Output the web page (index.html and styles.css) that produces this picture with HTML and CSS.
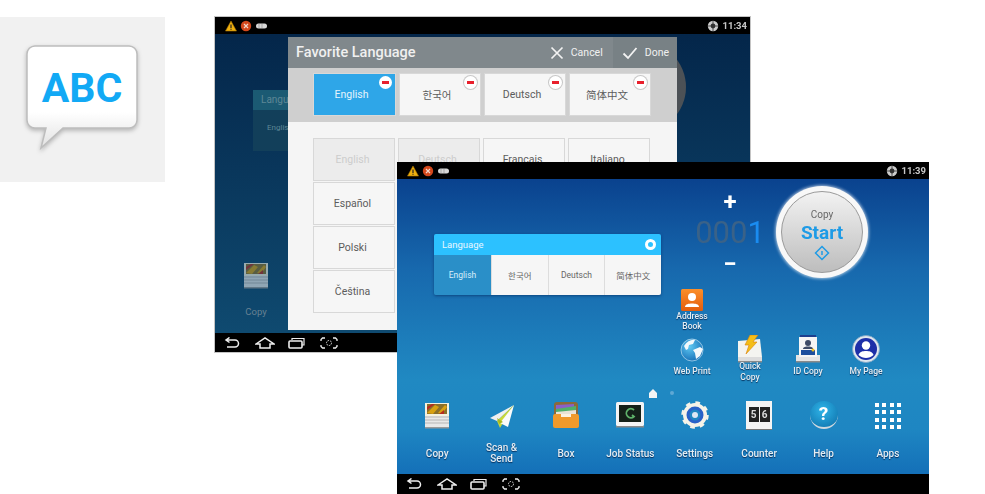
FILE: index.html
```html
<!DOCTYPE html>
<html lang="en">
<head>
    <meta charset="UTF-8">
    <meta name="viewport" content="width=device-width, initial-scale=1.0">
    <title>Language Settings</title>
    <link rel="stylesheet" href="styles.css">
</head>
<body>
    <svg class="defs" width="0" height="0" aria-hidden="true">
        <defs>
            <symbol id="i-warn" viewBox="0 0 12 12"><path d="M6 1 11.5 11H.5z" fill="#eeb010" stroke="#a87200" stroke-width=".6"/><path d="M6 4.500v3.400M6 8.800v1" stroke="#222" stroke-width="1.200"/></symbol>
            <symbol id="i-err" viewBox="0 0 12 12"><circle cx="6" cy="6" r="5.200" fill="#d4481c"/><path d="M4 4l4 4M8 4l-4 4" stroke="#f3d8cc" stroke-width="1.200"/></symbol>
            <symbol id="i-msg" viewBox="0 0 12 12"><path d="M3.500 3.500h6a2.200 2.200 0 0 1 0 5h-6a2.500 2.500 0 0 1 0-5z" fill="#d8d8d8"/><path d="M4 4v4M7 4v4" stroke="#888" stroke-width=".6"/></symbol>
            <symbol id="i-globe" viewBox="0 0 12 12"><circle cx="6" cy="6" r="5.200" fill="#ccc"/><circle cx="6" cy="6" r="2.400" fill="#333"/><path d="M.8 6h10.400M6 .8v10.400" stroke="#333" stroke-width=".8"/></symbol>
            <symbol id="i-back" viewBox="0 0 20 12"><path d="M3 3h9a3.500 3.500 0 0 1 0 7H4M6.500 .5 3 3l3.500 2.500" fill="none" stroke="#eee" stroke-width="1.500"/></symbol>
            <symbol id="i-home" viewBox="0 0 20 12"><path d="M1 7 10 1l9 6h-4v4H5V7z" fill="none" stroke="#eee" stroke-width="1.500"/></symbol>
            <symbol id="i-recent" viewBox="0 0 20 12"><path d="M5 3V1.500h12V8h-2" fill="none" stroke="#eee" stroke-width="1.200"/><rect x="2" y="4" width="13" height="7" rx="1" fill="none" stroke="#eee" stroke-width="1.600"/></symbol>
            <symbol id="i-capture" viewBox="0 0 20 12"><path d="M2 4V2.500L3.500 1H6M14 1h2.500L18 2.500V4M18 8v1.500L16.500 11H14M6 11H3.500L2 9.500V8" fill="none" stroke="#eee" stroke-width="1.300"/><circle cx="10" cy="6" r="2.500" fill="none" stroke="#ddd" stroke-width="1" stroke-dasharray="1.500 1"/></symbol>
            <symbol id="i-copy" viewBox="0 0 26 28"><path d="M1 13h24v13H1z" fill="#e8e8e8"/><path d="M1 16h24M1 19h24M1 22h24" stroke="#aaa" stroke-width=".8"/><rect x="1" y="2" width="24" height="13" fill="#f4f1df"/><rect x="3" y="3" width="20" height="10" fill="#8a6f2a"/><path d="M3 12 11 4l4 2-6 7zM14 12l7-8 2 2-5 7z" fill="#d8a010"/><path d="M3 6l5-3h3L3 9zM15 13l5-4v4z" fill="#b52a20"/><path d="M1 26h24v1.500H1z" fill="#999"/></symbol>
        </defs>
    </svg>

    <div class="stage">
        <div class="tile">
            <svg class="bubble" viewBox="0 0 165 165" width="165" height="165">
                <defs>
                    <linearGradient id="bubbleFill" x1="0" y1="0" x2="0" y2="1">
                        <stop offset="0" stop-color="#fff"/>
                        <stop offset=".65" stop-color="#fff"/>
                        <stop offset="1" stop-color="#e2e2e2"/>
                    </linearGradient>
                </defs>
                <path class="bubble-shape" d="M35 29h94a8 8 0 0 1 8 8v66a8 8 0 0 1-8 8H63l-22 20 5-20H35a8 8 0 0 1-8-8V37a8 8 0 0 1 8-8z" fill="url(#bubbleFill)" stroke="#bdbdbd" stroke-width="1.500"/>
                <text class="bubble-text" x="82" y="85" text-anchor="middle">ABC</text>
            </svg>
        </div>

        <div class="screen screen-back">
            <div class="status">
                <svg class="st-icon"><use href="#i-warn"/></svg>
                <svg class="st-icon"><use href="#i-err"/></svg>
                <svg class="st-icon"><use href="#i-msg"/></svg>
                <svg class="st-icon st-right"><use href="#i-globe"/></svg>
                <span class="time">11:34</span>
            </div>
            <div class="home home-dim">
                <div class="dim-start"></div>
                <div class="dim-card">
                    <div class="dim-card-head">Language</div>
                    <div class="dim-card-body">English</div>
                </div>
                <div class="dim-copy">
                    <svg width="26" height="28"><use href="#i-copy"/></svg>
                    <span>Copy</span>
                </div>

                <div class="modal">
                    <div class="modal-head">
                        <span class="modal-title">Favorite Language</span>
                        <div class="modal-action">
                            <svg width="14" height="14" viewBox="0 0 14 14"><path d="M1.500 1.500l11 11M12.500 1.500l-11 11" stroke="#f2f2f2" stroke-width="1.700"/></svg>
                            <span>Cancel</span>
                        </div>
                        <div class="modal-action action-done">
                            <svg width="16" height="14" viewBox="0 0 16 14"><path d="M1.500 7.500l4.500 4.500L14.500 2" fill="none" stroke="#f2f2f2" stroke-width="1.800"/></svg>
                            <span>Done</span>
                        </div>
                    </div>
                    <div class="fav-row">
                        <div class="lang-tile selected">English<i class="remove"></i></div>
                        <div class="lang-tile cjk-kr">한국어<i class="remove"></i></div>
                        <div class="lang-tile">Deutsch<i class="remove"></i></div>
                        <div class="lang-tile cjk-sc">简体中文<i class="remove"></i></div>
                    </div>
                    <div class="lang-grid">
                        <div class="lang-tile disabled">English</div>
                        <div class="lang-tile disabled">Deutsch</div>
                        <div class="lang-tile">Français</div>
                        <div class="lang-tile">Italiano</div>
                        <div class="lang-tile">Español</div>
                        <div class="lang-tile first-col">Polski</div>
                        <div class="lang-tile first-col">Čeština</div>
                    </div>
                </div>
            </div>
            <div class="nav">
                <svg class="nav-icon"><use href="#i-back"/></svg>
                <svg class="nav-icon"><use href="#i-home"/></svg>
                <svg class="nav-icon"><use href="#i-recent"/></svg>
                <svg class="nav-icon"><use href="#i-capture"/></svg>
            </div>
        </div>

        <div class="screen screen-front">
            <div class="status">
                <svg class="st-icon"><use href="#i-warn"/></svg>
                <svg class="st-icon"><use href="#i-err"/></svg>
                <svg class="st-icon"><use href="#i-msg"/></svg>
                <svg class="st-icon st-right"><use href="#i-globe"/></svg>
                <span class="time">11:39</span>
            </div>
            <div class="home home-front">
                <div class="home-top">
                    <div class="lang-card">
                        <div class="lang-card-head">
                            <span>Language</span>
                            <i class="gear-dot"></i>
                        </div>
                        <div class="lang-card-tabs">
                            <div class="lang-tab active">English</div>
                            <div class="lang-tab cjk-kr">한국어</div>
                            <div class="lang-tab">Deutsch</div>
                            <div class="lang-tab cjk-sc">简体中文</div>
                        </div>
                    </div>
                    <div class="counter">
                        <span class="counter-btn">+</span>
                        <span class="counter-num">000<b>1</b></span>
                        <span class="counter-btn">−</span>
                    </div>
                    <div class="start">
                        <div class="start-inner">
                            <span class="start-copy">Copy</span>
                            <span class="start-label">Start</span>
                            <svg width="16" height="16" viewBox="0 0 16 16"><path d="M8 1.500 14.500 8 8 14.500 1.500 8z" fill="none" stroke="#1e9be6" stroke-width="1.500"/><path d="M8 6v4" stroke="#1e9be6" stroke-width="1.500"/></svg>
                        </div>
                    </div>
                </div>

                <div class="shortcuts">
                    <div class="app app-address">
                        <svg width="22" height="22" viewBox="0 0 22 22">
                            <defs><linearGradient id="orange" x1="0" y1="0" x2="0" y2="1"><stop offset="0" stop-color="#fb8f2a"/><stop offset="1" stop-color="#e45c0c"/></linearGradient></defs>
                            <rect width="22" height="22" rx="1.500" fill="url(#orange)"/>
                            <circle cx="11" cy="8" r="4" fill="#fff"/>
                            <path d="M4 18c0-3 4-3.500 7-3.500s7 .5 7 3.500z" fill="#fff"/>
                        </svg>
                        <span class="app-label">Address<br>Book</span>
                    </div>
                    <div class="shortcuts-gap"></div>
                    <div class="app">
                        <svg width="24" height="28" viewBox="0 0 24 28">
                            <defs><radialGradient id="globe" cx=".4" cy=".35" r=".8"><stop offset="0" stop-color="#5fc8f2"/><stop offset="1" stop-color="#0b62ae"/></radialGradient></defs>
                            <circle cx="12" cy="15" r="11" fill="url(#globe)" stroke="#d8eef8" stroke-width=".6"/>
                            <path d="M4 11c3-5 8-7 11-6l-2 4-4 1-1 4-2 1zM13 15l7-3 3 2-3 7-4 3-1-6z" fill="#f2f8fb"/>
                        </svg>
                        <span class="app-label">Web Print</span>
                    </div>
                    <div class="app app-tight">
                        <svg width="26" height="28" viewBox="0 0 26 28">
                            <path d="M1 6l22-2 2 18H1z" fill="#f4f4f0"/>
                            <path d="M1 22h24v4H1z" fill="#dcdcdc"/>
                            <path d="M1 26h24v1.500H1z" fill="#8a8a8a"/>
                            <path d="M13 0h8l-5 7h4L9 19l3-9H8z" fill="#f4be18" stroke="#d9820a" stroke-width=".6"/>
                        </svg>
                        <span class="app-label">Quick<br>Copy</span>
                    </div>
                    <div class="app">
                        <svg width="26" height="28" viewBox="0 0 26 28">
                            <path d="M5 0h16v3H5z" fill="#1d3f8e"/>
                            <rect x="4" y="2" width="18" height="20" fill="#f5f5f5"/>
                            <circle cx="13" cy="8" r="3" fill="#3d4a66"/>
                            <path d="M8 14c0-2 3-2.500 5-2.500s5 .5 5 2.500z" fill="#3d4a66"/>
                            <rect x="6" y="15" width="14" height="5" fill="#1d4f9e"/>
                            <circle cx="18" cy="15" r="1.500" fill="#f0c020"/>
                            <path d="M1 20h3v2h18v-2h3v6H1z" fill="#e4e4e4"/>
                            <path d="M1 26h24v1.500H1z" fill="#8a8a8a"/>
                        </svg>
                        <span class="app-label">ID Copy</span>
                    </div>
                    <div class="app">
                        <svg width="28" height="28" viewBox="0 0 28 28">
                            <circle cx="14" cy="14" r="13.500" fill="#dfe7ee" stroke="#7da3c4" stroke-width=".8"/>
                            <circle cx="14" cy="14" r="11" fill="#1d2fa8"/>
                            <circle cx="14" cy="10.500" r="4.200" fill="#fff"/>
                            <path d="M6.500 20c1-3.500 4.500-4 7.500-4s6.500 .5 7.500 4c-2 2-5 3-7.500 3s-5.500-1-7.500-3z" fill="#fff"/>
                        </svg>
                        <span class="app-label">My Page</span>
                    </div>
                </div>

                <div class="pager">
                    <svg width="10" height="9" viewBox="0 0 10 9"><path d="M5 0 9 4v5H1V4z" fill="#f4f4f4"/></svg>
                    <i class="pager-dot"></i>
                </div>

                <div class="dock">
                    <div class="dock-item">
                        <svg width="26" height="28"><use href="#i-copy"/></svg>
                        <span class="dock-label">Copy</span>
                    </div>
                    <div class="dock-item">
                        <svg width="26" height="28" viewBox="0 0 26 28">
                            <path d="M25 4 1 17l7 3z" fill="#f0f0f0"/>
                            <path d="M25 4 8 20l3 7z" fill="#c9d83a"/>
                            <path d="M25 4 11 22l8 4z" fill="#fbfbfb"/>
                            <path d="M8 17l2 6 4-2z" fill="#a9b820"/>
                        </svg>
                        <span class="dock-label">Scan &amp;<br>Send</span>
                    </div>
                    <div class="dock-item">
                        <svg width="28" height="28" viewBox="0 0 28 28">
                            <rect x="2" y="1" width="24" height="15" rx="3" fill="#8a6a3a"/>
                            <path d="M4 4l18-1v4L4 9z" fill="#8a5fc8"/>
                            <path d="M4 8l20-3v4L4 12z" fill="#4fb06a"/>
                            <path d="M4 11l20-2v4H4z" fill="#e9e3d6"/>
                            <rect x="1" y="13" width="26" height="14" rx="2" fill="#ef9a2c"/>
                            <rect x="9" y="13" width="10" height="3" fill="#fbf2e2"/>
                        </svg>
                        <span class="dock-label">Box</span>
                    </div>
                    <div class="dock-item">
                        <svg width="28" height="26" viewBox="0 0 28 26">
                            <rect width="28" height="24" rx="1.500" fill="#f4f4f4"/>
                            <rect x="3" y="3" width="22" height="17" fill="#142018"/>
                            <path d="M18 8a4.500 4.500 0 1 0 0 6.500l-2-1.500" fill="none" stroke="#5fb26a" stroke-width="1.800"/>
                            <path d="M0 24h28v1.500H0z" fill="#8a8a8a"/>
                        </svg>
                        <span class="dock-label">Job Status</span>
                    </div>
                    <div class="dock-item">
                        <svg width="28" height="28" viewBox="0 0 28 28">
                            <circle cx="14" cy="14" r="9.500" fill="none" stroke="#f6f3e8" stroke-width="5"/>
                            <circle cx="14" cy="14" r="12" fill="none" stroke="#f6f3e8" stroke-width="3.500" stroke-dasharray="4.500 4.925"/>
                            <circle cx="14" cy="14" r="7" fill="none" stroke="#2a62c8" stroke-width="3"/>
                            <circle cx="14" cy="14" r="3" fill="#dce8f4"/>
                        </svg>
                        <span class="dock-label">Settings</span>
                    </div>
                    <div class="dock-item">
                        <div class="counter-app"><span>5</span><span>6</span></div>
                        <span class="dock-label">Counter</span>
                    </div>
                    <div class="dock-item">
                        <div class="help-app">?</div>
                        <span class="dock-label">Help</span>
                    </div>
                    <div class="dock-item">
                        <div class="apps-grid">
                            <i></i><i></i><i></i><i></i><i></i><i></i><i></i><i></i>
                            <i></i><i></i><i></i><i></i><i></i><i></i><i></i><i></i>
                        </div>
                        <span class="dock-label">Apps</span>
                    </div>
                </div>
            </div>
            <div class="nav">
                <svg class="nav-icon"><use href="#i-back"/></svg>
                <svg class="nav-icon"><use href="#i-home"/></svg>
                <svg class="nav-icon"><use href="#i-recent"/></svg>
                <svg class="nav-icon"><use href="#i-capture"/></svg>
            </div>
        </div>
    </div>
</body>
</html>
```
FILE: styles.css
```css
html, body { margin: 0; padding: 0; background: #fff; }
body { font-family: Roboto, "Liberation Sans", "Noto Sans CJK KR", sans-serif; overflow: hidden; }
.defs { position: absolute; }
.stage { position: relative; width: 985px; height: 494px; overflow: hidden; }
.cjk-kr { font-family: Roboto, "Noto Sans CJK KR", sans-serif; }
.cjk-sc { font-family: Roboto, "Noto Sans CJK SC", sans-serif; }

/* speech bubble tile */
.tile { position: absolute; left: 0; top: 17px; width: 165px; height: 165px; background: #f1f1f1; }
.bubble { display: block; }
.bubble-shape { filter: drop-shadow(0 2px 2px rgba(0, 0, 0, 0.25)); }
.bubble-text { font-family: Roboto, sans-serif; font-weight: 700; font-size: 41px; fill: #12a9f5; }

/* the two device screens, placed free on the canvas */
.screen { position: absolute; display: flex; flex-direction: column; width: 535px; filter: blur(0.6px); }
.screen-back { left: 215px; top: 17px; height: 335px; box-shadow: 0 0 0 1px #c4c4c4; }
.screen-front { left: 397px; top: 162px; width: 532px; height: 332px; }

.status { display: flex; align-items: center; flex: none; height: 17px; padding: 0 3px 0 10px; gap: 3px; background: #000; }
.st-icon { width: 12px; height: 12px; }
.st-right { margin-left: auto; }
.time { color: #c8c8c8; font-size: 9.500px; font-weight: 700; margin-left: 1px; }

.nav { display: flex; align-items: center; flex: none; height: 19px; padding-left: 8px; gap: 12px; background: #000; }
.screen-front .nav { height: 20px; }
.nav-icon { width: 20px; height: 12px; }

.home { position: relative; flex: 1; min-height: 0; }

/* back screen */
.home-dim { padding: 56px 0 0 38px; background: linear-gradient(#04264a, #0f4a70); }
.dim-start { position: absolute; left: 379px; top: 7px; width: 92px; height: 92px; border-radius: 50%; background: #4c5156; }
.dim-card { width: 200px; height: 61px; background: #123f5a; }
.dim-card-head { height: 20px; line-height: 20px; padding-left: 8px; font-size: 10px; color: #5d8796; background: #1b5a73; }
.dim-card-body { padding: 13px 0 0 14px; font-size: 8px; color: #5d8796; }
.dim-copy { display: flex; flex-direction: column; align-items: center; width: 26px; margin: 110px 0 0 -10px; opacity: 0.6; }
.dim-copy span { margin-top: 17px; font-size: 9.500px; color: #a0a8ac; }

.modal { position: absolute; left: 73px; top: 3px; bottom: 3px; width: 389px; background: #f5f5f5; }
.modal-head { display: flex; align-items: center; height: 31px; background: #80888c; color: #f0f0f0; }
.modal-title { flex: 1; padding-left: 8px; font-size: 14.500px; font-weight: 500; }
.modal-action { display: flex; align-items: center; gap: 7px; height: 100%; padding-right: 10px; font-size: 10.500px; }
.action-done { gap: 7px; padding: 0 8px 0 9px; background: #788185; }
.fav-row { display: flex; gap: 5px; height: 54px; box-sizing: border-box; padding: 6px 0 0 26px; background: #cfcfcf; }
.lang-tile { position: relative; display: flex; align-items: center; justify-content: center; box-sizing: border-box; width: 80px; height: 41px; padding-right: 3px; font-size: 10.500px; color: #5c5c5c; background: #f6f6f6; box-shadow: 0 0 0 1px #d8d8d8; }
.fav-row .lang-tile { padding-right: 6px; }
.selected { width: 81px; color: #e6f4fc; background: #2ea6e8; }
.disabled { color: #cdcdcd; background: #ececec; }
.remove { position: absolute; right: 3px; top: 2px; width: 13px; height: 13px; border-radius: 50%; background: #fff; box-shadow: 0 0 0 1px #c8c8c8; }
.selected .remove { box-shadow: none; }
.remove::after { content: ""; position: absolute; left: 3px; top: 5px; width: 7px; height: 3px; background: #e8202c; }
.lang-grid { display: grid; grid-template-columns: repeat(4, 80px); grid-auto-rows: 41px; gap: 3px 5px; padding: 17px 0 0 26px; }
.first-col { grid-column: 1; }

/* front screen */
.home-front { display: flex; flex-direction: column; background: linear-gradient(#0a428e 0%, #1768ad 30%, #2089c2 68%, #1e86c2 85%, #1470b8 100%); }
.home-top { display: flex; align-items: flex-start; height: 110px; padding-left: 37px; }
.lang-card { flex: none; width: 227px; margin-top: 55px; border-radius: 2px; overflow: hidden; box-shadow: 0 1px 3px rgba(0, 30, 80, 0.5); }
.lang-card-head { display: flex; align-items: center; justify-content: space-between; height: 21px; padding: 0 5px 0 8px; font-size: 9.500px; color: #e8f7ff; background: #2cc1ff; }
.gear-dot { width: 5px; height: 5px; border: 3px solid #fff; border-radius: 50%; }
.lang-card-tabs { display: flex; height: 40px; background: #f6f6f6; }
.lang-tab { flex: 1; display: flex; align-items: center; justify-content: center; font-size: 8.500px; color: #666; border-left: 1px solid #ddd; }
.lang-tab.active { flex: none; width: 57px; color: #d8eefa; background: #2a8fc8; border-left: 0; }

.counter { display: flex; flex-direction: column; align-items: center; width: 68px; margin: 8px 0 0 35px; color: #fff; }
.counter-btn { height: 30px; line-height: 30px; font-size: 24px; font-weight: 700; }
.counter-num { height: 30px; margin: 1px 0 1px; line-height: 30px; font-size: 31px; font-weight: 400; color: #3a6288; }
.counter-num b { font-weight: 400; color: #1a8cf0; }

.start { flex: none; box-sizing: border-box; width: 92px; height: 92px; margin: 7px 0 0 12px; padding: 5px; border-radius: 50%; background: #f8f8f8; box-shadow: 0 0 3px 1px rgba(255, 255, 255, 0.6); }
.start-inner { display: flex; flex-direction: column; align-items: center; box-sizing: border-box; height: 100%; padding-top: 17px; border: 1px solid #9a9a9a; border-radius: 50%; background: linear-gradient(#f2f2f2, #bdbdbd); }
.start-copy { height: 12px; line-height: 12px; font-size: 10px; color: #666; }
.start-label { height: 23px; line-height: 23px; font-size: 19px; font-weight: 700; color: #1e9be6; }
.start-inner svg { margin-top: 1px; }

.shortcuts { display: grid; grid-template-columns: repeat(4, 58px); padding-left: 266px; }
.shortcuts-gap { grid-column: 2 / 5; height: 46px; }
.app { display: flex; flex-direction: column; align-items: center; }
.app svg { flex: none; }
.app-label, .dock-label { color: #e4edf3; font-size: 8.500px; font-weight: 500; line-height: 10px; text-align: center; text-shadow: 0 1px 1px rgba(0, 30, 70, 0.8); }
.app-label { margin-top: 3px; }
.app-tight .app-label { margin-top: -2px; line-height: 11px; }
.app-address .app-label { margin-top: 0; }

.pager { display: flex; align-items: center; gap: 12px; height: 8px; margin-top: 6px; padding-left: 251px; }
.pager-dot { width: 4px; height: 4px; border-radius: 50%; background: #5fa8d4; }

.dock { display: grid; grid-template-columns: repeat(8, 64.400px); margin-top: 4px; padding-left: 8px; }
.dock-item { display: flex; flex-direction: column; align-items: center; height: 64px; }
.dock-item > svg, .dock-item > div { flex: none; height: 28px; }
.dock-label { display: flex; align-items: center; height: 24px; margin-top: 12px; font-size: 10px; line-height: 11px; }

.counter-app { display: flex; justify-content: center; align-items: center; gap: 1px; box-sizing: border-box; width: 26px; padding-bottom: 2px; background: #f4f4f4; box-shadow: 0 1px 0 #777; }
.counter-app span { width: 10px; height: 15px; line-height: 15px; text-align: center; font-size: 10px; font-weight: 700; color: #ddd; background: #222; }
.help-app { box-sizing: border-box; width: 28px; line-height: 26px; text-align: center; font-size: 19px; font-weight: 700; color: #fff; border-bottom: 2px solid #cfd8de; border-radius: 50%; background: radial-gradient(circle at 45% 35%, #2fb4e8, #0c6ea8); }
.apps-grid { display: grid; box-sizing: border-box; grid-template-columns: repeat(4, 4px); grid-auto-rows: 4px; gap: 3.300px; padding-top: 2px; }
.apps-grid i { background: #fff; }
```
